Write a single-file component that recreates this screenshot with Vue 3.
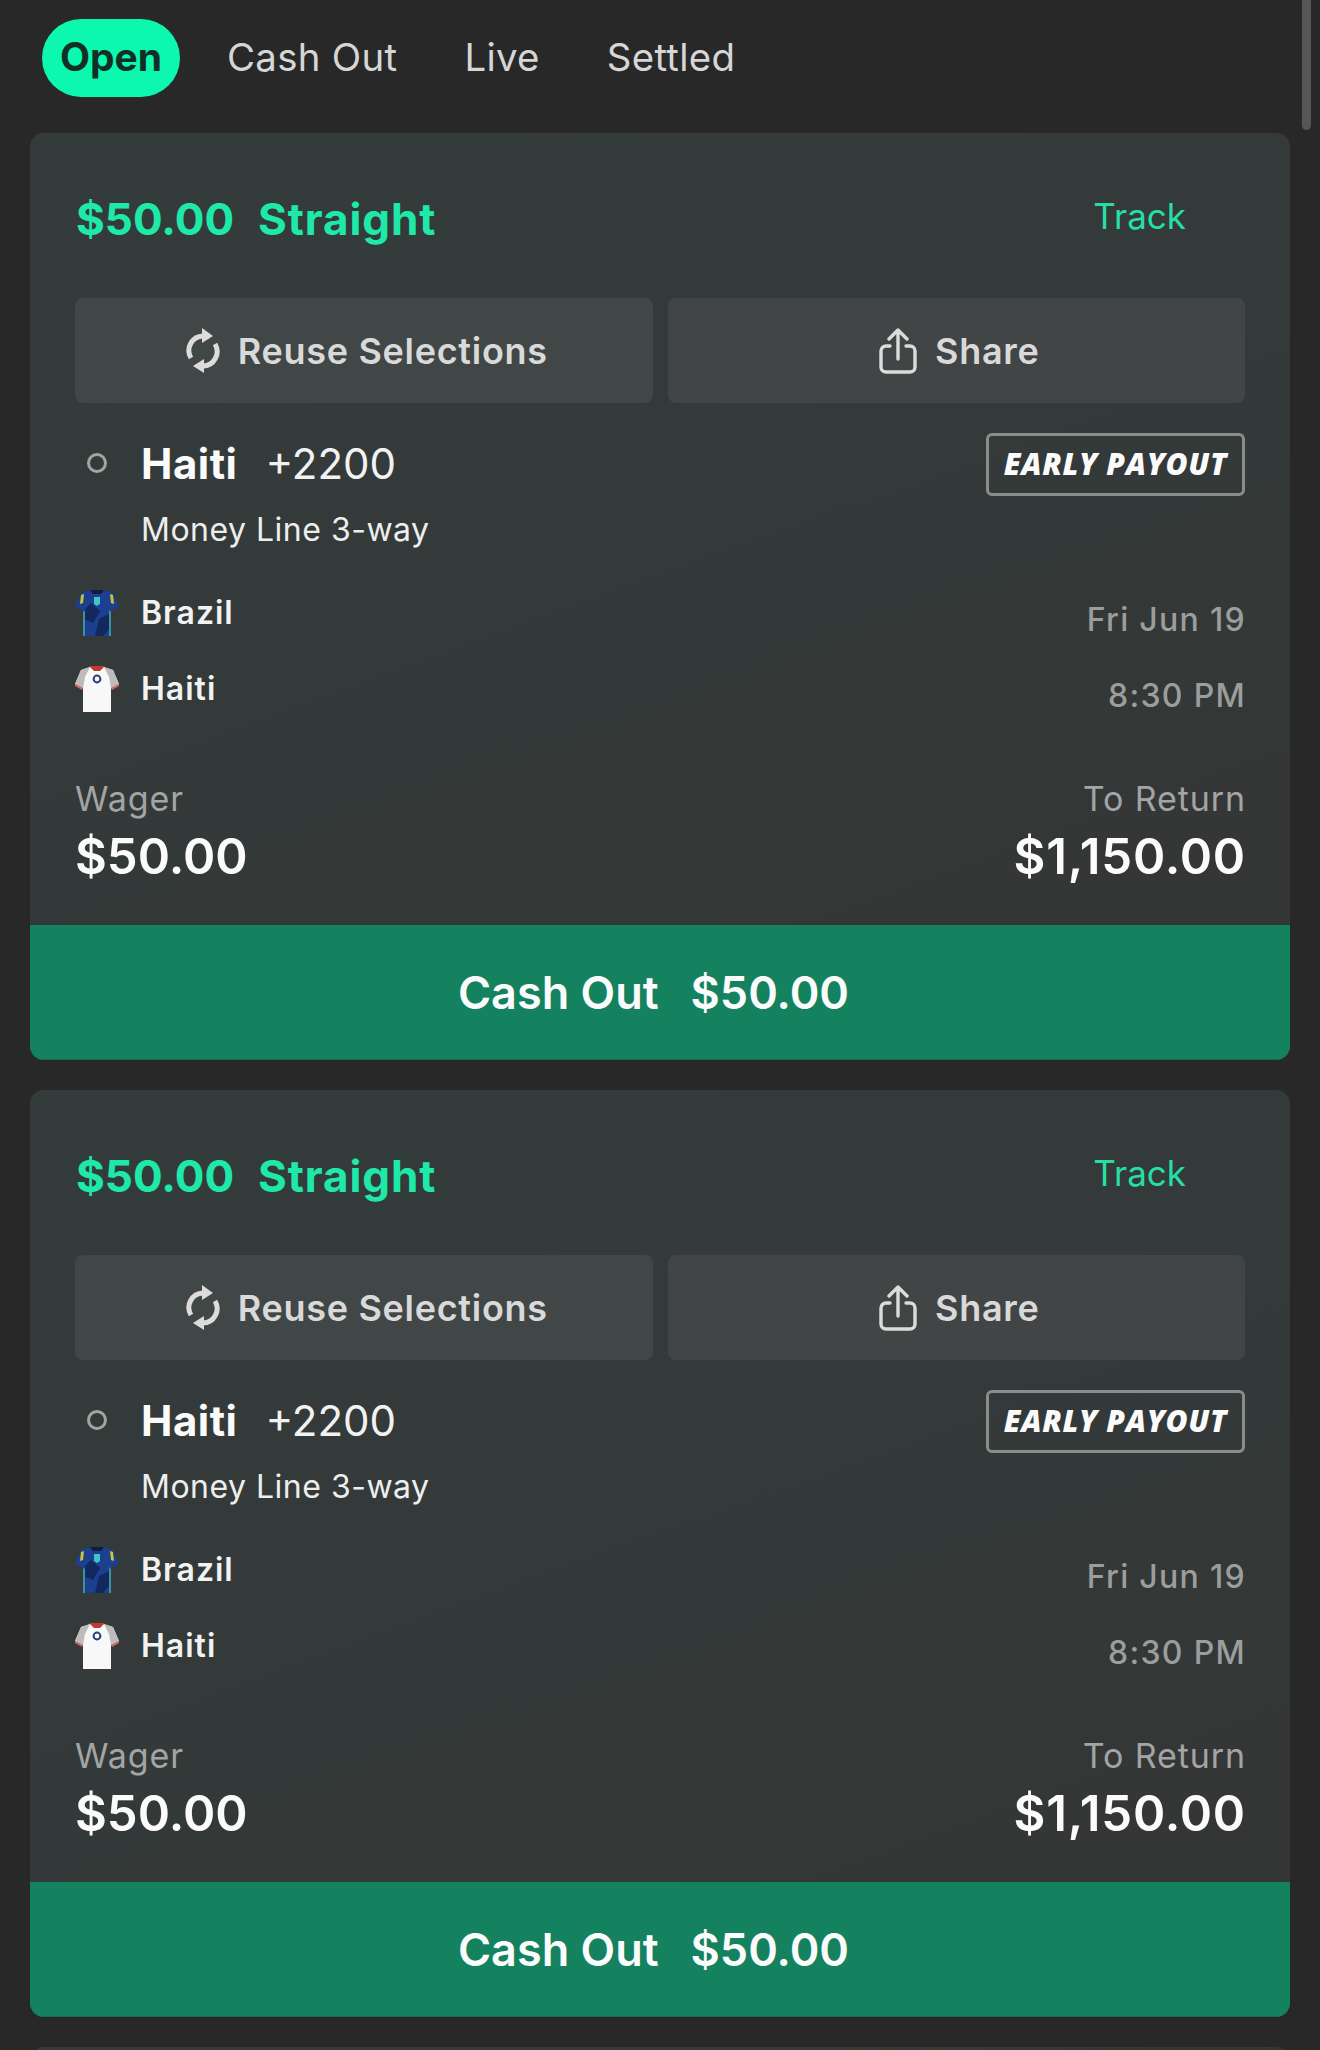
<script setup>
const tabs = ['Open', 'Cash Out', 'Live', 'Settled']
const bets = [1, 2]
</script>

<template>
  <main class="page">
    <nav class="tabs">
      <span v-for="(tab, i) in tabs" :key="tab" class="tab" :class="{ active: i === 0 }">{{ tab }}</span>
    </nav>

    <section v-for="bet in bets" :key="bet" class="card">
      <div class="card-body">
        <header class="card-head">
          <h2 class="title"><span>$50.00</span><span class="title-type">Straight</span></h2>
          <a class="track">Track</a>
        </header>

        <div class="actions">
          <button class="action">
            <svg class="icon-reuse" viewBox="0 0 34 46" width="34" height="46">
              <path d="M5 30A14.5 14.5 0 0 1 17 8" fill="none" stroke="#dcdcdc" stroke-width="5" />
              <path d="M29 16A14.5 14.5 0 0 1 17 38" fill="none" stroke="#dcdcdc" stroke-width="5" />
              <path d="M16 0L27 8L16 15Z" fill="#dcdcdc" />
              <path d="M18 31L7 38L18 45Z" fill="#dcdcdc" />
            </svg>
            Reuse Selections
          </button>
          <button class="action">
            <svg class="icon-share" viewBox="0 0 38 46" width="38" height="46">
              <path d="M11 18H7a5 5 0 0 0-5 5v16a5 5 0 0 0 5 5h24a5 5 0 0 0 5-5V23a5 5 0 0 0-5-5h-4" fill="none" stroke="#dcdcdc" stroke-width="3.4" stroke-linecap="round" />
              <path d="M19 31V3M10 11l9-9 9 9" fill="none" stroke="#dcdcdc" stroke-width="3.4" stroke-linecap="round" stroke-linejoin="round" />
            </svg>
            Share
          </button>
        </div>

        <div class="selection">
          <span class="marker"></span>
          <span class="pick">Haiti</span>
          <span class="odds">+2200</span>
          <span class="badge">EARLY PAYOUT</span>
        </div>
        <p class="market">Money Line 3-way</p>

        <div class="team first">
          <svg class="jersey" viewBox="0 0 44 48" width="44" height="48">
            <path d="M15 1H29L38 4L44 18L36 22V47H8V22L0 18L6 4Z" fill="#1c3f90" />
            <path d="M8 22L16 14L25 22L18 34L8 30ZM24 30L36 24V38L28 47H20Z" fill="#12285f" />
            <path d="M15 1H29L26 5H18Z" fill="#0f1c3e" />
            <path d="M6 6L9 5L8 14L5 15ZM38 6L35 5L36 14L39 15Z" fill="#c9c43a" />
            <path d="M19 8H25V15L22 17L19 15Z" fill="#3fc4c8" />
            <path d="M8 23V47H10V21ZM36 23V47H34V21Z" fill="#3d8fa5" />
          </svg>
          <span class="team-name">Brazil</span>
          <span class="when">Fri Jun 19</span>
        </div>
        <div class="team">
          <svg class="jersey" viewBox="0 0 44 48" width="44" height="48">
            <path d="M15 2H29L38 5L44 19L36 23V47H8V23L0 19L6 5Z" fill="#f8f8f8" />
            <path d="M15 2L6 5L0 19L8 23L10 12ZM29 2L38 5L44 19L36 23L34 12Z" fill="#bcbcbc" />
            <path d="M14 1H30L25 6H19Z" fill="#c03a32" />
            <path d="M0 19L8 23L7 25L0 21ZM44 19L36 23L37 25L44 21Z" fill="#d06a62" />
            <circle cx="22" cy="14" r="3.4" fill="none" stroke="#2c3f73" stroke-width="2" />
          </svg>
          <span class="team-name">Haiti</span>
          <span class="when">8:30 PM</span>
        </div>

        <div class="totals">
          <div>
            <div class="label">Wager</div>
            <div class="amount">$50.00</div>
          </div>
          <div class="right">
            <div class="label">To Return</div>
            <div class="amount return">$1,150.00</div>
          </div>
        </div>
      </div>
      <button class="cashout"><span>Cash Out</span><span>$50.00</span></button>
    </section>

    <div class="card card-peek"></div>
    <div class="scrollbar"></div>
  </main>
</template>

<style>
body {
  background: #282828;
}
</style>

<style scoped>
.page {
  position: relative;
  height: 100vh;
  overflow: hidden;
  background: #282828;
  font-family: Inter, "Liberation Sans", sans-serif;
}

.tabs {
  display: flex;
  align-items: center;
  height: 78px;
  padding: 19px 0 36px 42px;
  gap: 67px;
}

.tab {
  margin-top: -3px;
  font-size: 38.4px;
  letter-spacing: 0.3px;
  line-height: 78px;
  color: #d6d6d6;
}

.tab.active {
  width: 138px;
  height: 78px;
  margin-top: 0;
  margin-right: -20px;
  border-radius: 39px;
  background: #0cf8ae;
  color: #103027;
  font-size: 39px;
  font-weight: 700;
  letter-spacing: 0;
  line-height: 76px;
  text-align: center;
}

.card {
  margin: 0 30px 30px;
  border-radius: 14px;
  overflow: hidden;
  background: linear-gradient(160deg, #343c3b, #333a39 45%, #353535);
}

.card-peek {
  height: 40px;
}

.card-body {
  padding: 56px 45px 39px;
}

.card-head {
  display: flex;
  justify-content: space-between;
  align-items: center;
  height: 60px;
  margin-bottom: 49px;
}

.title {
  display: flex;
  gap: 24px;
  margin: 0 0 0 1px;
  font-size: 44px;
  font-weight: 700;
  line-height: 60px;
  color: #1fe9a8;
}

.title-type {
  letter-spacing: 0.9px;
}

.track {
  margin: 0 59px 6px 0;
  font-size: 35px;
  color: #25dfa4;
}

.actions {
  display: flex;
  gap: 15px;
}

.action {
  flex: 1;
  display: flex;
  align-items: center;
  justify-content: center;
  gap: 18px;
  height: 105px;
  padding: 0 0 0 6px;
  border: none;
  border-radius: 8px;
  background: #404746;
  color: #d9d9d9;
  font-family: inherit;
  font-size: 36px;
  font-weight: 600;
  letter-spacing: 0.7px;
}

.action + .action {
  background: #424545;
}

.selection {
  display: flex;
  align-items: center;
  height: 63px;
  margin-top: 30px;
}

.marker {
  width: 20px;
  height: 20px;
  box-sizing: border-box;
  margin: -4px 34px 0 12px;
  border: 3px solid #a3a5a4;
  border-radius: 50%;
}

.pick {
  margin-top: -2px;
  font-size: 42px;
  font-weight: 700;
  letter-spacing: 0.5px;
  color: #fbfbfb;
}

.odds {
  margin-top: -2px;
  margin-left: 28px;
  font-size: 42px;
  color: #f2f2f2;
}

.badge {
  margin-left: auto;
  width: 259px;
  height: 63px;
  box-sizing: border-box;
  border: 3px solid #8b8d8c;
  border-radius: 6px;
  font-family: "Open Sans", "Liberation Sans", sans-serif;
  font-size: 30px;
  font-style: italic;
  font-weight: 800;
  letter-spacing: 0.7px;
  line-height: 56px;
  text-align: center;
  white-space: nowrap;
  color: #fbfbfb;
}

.market {
  margin: 14px 0 0 66px;
  font-size: 32px;
  letter-spacing: 0.5px;
  line-height: 40px;
  color: #eeeeee;
}

.team {
  display: flex;
  align-items: center;
  height: 48px;
  margin-top: 28px;
}

.team.first {
  margin-top: 39px;
}

.jersey {
  flex: none;
  width: 44px;
  margin-right: 22px;
  filter: blur(0.4px);
}

.team-name {
  margin-top: -1px;
  font-size: 32px;
  font-weight: 600;
  letter-spacing: 1px;
  color: #f2f2f2;
}

.when {
  margin-left: auto;
  margin-right: -1px;
  padding-top: 13px;
  font-size: 32px;
  font-weight: 500;
  letter-spacing: 1.3px;
  color: #9c9e9d;
}

.totals {
  display: flex;
  justify-content: space-between;
  margin-top: 64px;
}

.right {
  margin-right: -1px;
  text-align: right;
}

.label {
  font-size: 34px;
  letter-spacing: 0.9px;
  line-height: 44px;
  color: #a3a5a4;
}

.amount {
  margin-top: 6px;
  margin-bottom: -1px;
  font-size: 49px;
  font-weight: 600;
  line-height: 60px;
  color: #fbfbfb;
}

.amount.return {
  letter-spacing: 0.8px;
}

.cashout {
  display: flex;
  align-items: center;
  justify-content: center;
  gap: 32px;
  width: 100%;
  height: 135px;
  padding: 0 13px 0 0;
  border: none;
  border-bottom: 1px solid #1a6a50;
  background: #14815f;
  color: #fbfbfb;
  font-family: inherit;
  font-size: 45px;
  font-weight: 600;
}

.scrollbar {
  position: absolute;
  top: 0;
  right: 9px;
  width: 9px;
  height: 130px;
  border-radius: 0 0 5px 5px;
  background: #555756;
}
</style>
